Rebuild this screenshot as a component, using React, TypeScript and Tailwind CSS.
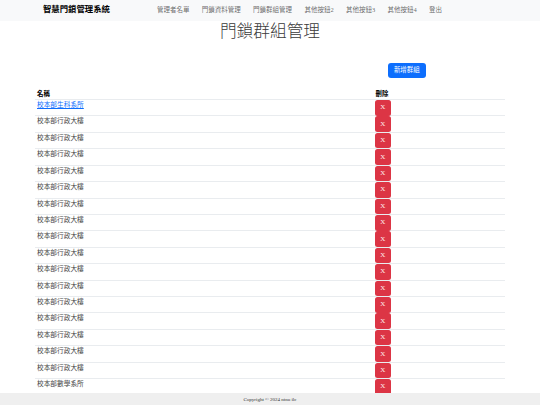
import React from 'react';

const navLinks = ['管理者名單', '門鎖資料管理', '門鎖群組管理', '其他按鈕2', '其他按鈕3', '其他按鈕4', '登出'];

const groups = [
  '校本部生科系所',
  ...Array(16).fill('校本部行政大樓'),
  '校本部數學系所',
];

const App: React.FC = () => {
  return (
    <div className="min-h-screen bg-white text-[#212529] font-['Liberation_Serif','Noto_Sans_CJK_TC',serif]">
      {/* Navbar */}
      <nav className="h-[21px] bg-[#f8f9fa] flex items-center pl-[43px]">
        <span className="w-[114px] text-[8.4px] font-bold leading-none text-black">智慧門鎖管理系統</span>
        <ul className="flex items-center gap-[12.3px]">
          {navLinks.map((link) => (
            <li key={link} className="text-[6.5px] leading-none text-[rgba(0,0,0,0.6)]">{link}</li>
          ))}
        </ul>
      </nav>

      <h1 className="mt-[1px] text-center text-[16.7px] font-light leading-[20px] text-[#3a3a3a]">門鎖群組管理</h1>

      <div className="mx-[35px]">
        <div className="mt-[20.7px] flex justify-end pr-[79px]">
          <button className="h-[15.6px] w-[38.5px] rounded-[3px] bg-[#0d6efd] text-[6.4px] leading-none text-white flex items-center justify-center">
            新增群組
          </button>
        </div>

        {/* Table */}
        <div className="mt-[10.7px]">
          <div className="flex h-[10px] text-[6.4px] leading-[9px] font-bold text-black">
            <div className="w-[339px] pl-[2px]">名稱</div>
            <div className="pl-[1.5px]">刪除</div>
          </div>
          {groups.map((name, idx) => (
            <div key={idx} className="flex items-start h-[16.43px] border-t border-[#e9ecef]">
              <div className="w-[340px] pl-[2px] text-[6.7px] leading-[9px]">
                {idx === 0 ? (
                  <a href="#" className="text-[#0d6efd] underline">{name}</a>
                ) : (
                  <span className="text-[#444]">{name}</span>
                )}
              </div>
              <button className="h-[15.6px] w-[15.6px] rounded-[2.5px] bg-[#dc3545] text-[#fdeef0] text-[7px] font-normal leading-none flex items-center justify-center">
                X
              </button>
            </div>
          ))}
        </div>
      </div>

      <footer className="fixed bottom-0 left-0 right-0 h-[12px] bg-[#efefef] flex items-center justify-center text-[5px] leading-none text-[#333]">
        Copyright © 2024 ntnu ilc
      </footer>
    </div>
  );
};

export default App;
